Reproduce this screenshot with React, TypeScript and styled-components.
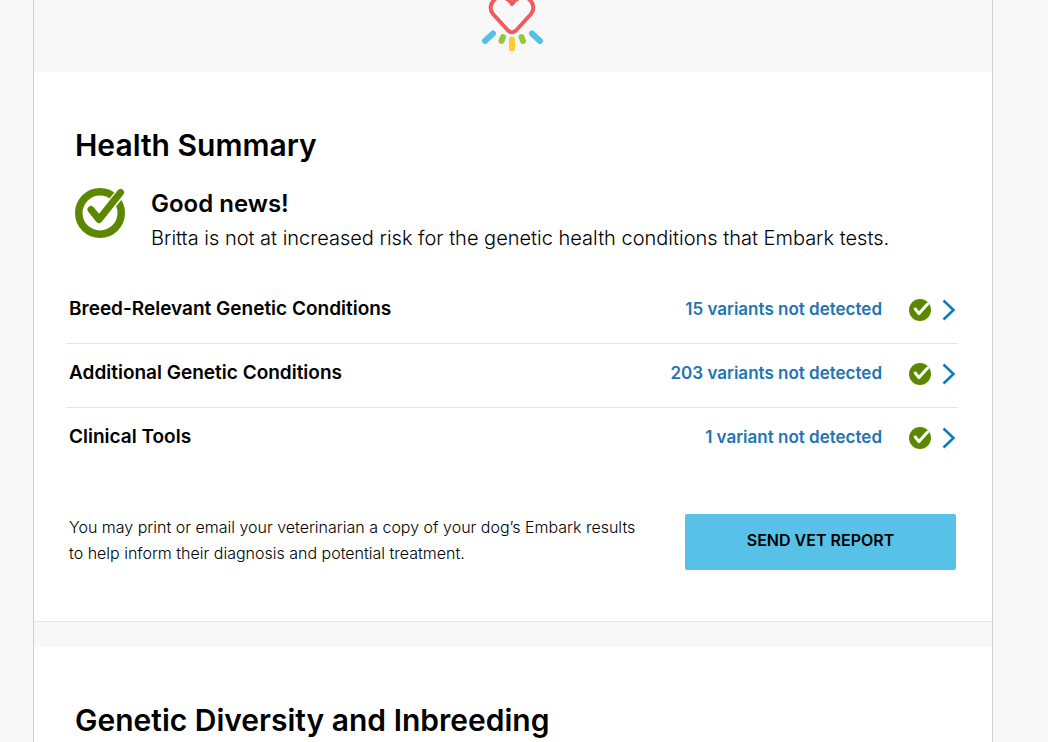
import React from "react";
import styled, { createGlobalStyle } from "styled-components";

const GlobalStyle = createGlobalStyle`
  *, *::before, *::after { box-sizing: border-box; }
  body {
    margin: 0;
    background: #f8f8f8;
    color: #000;
    font-family: Inter, "Liberation Sans", sans-serif;
  }
  h2, h3, p, ul { margin: 0; padding: 0; }
`;

const Page = styled.div`
  min-height: 100vh;
  padding: 0 55px 0 33px;
  display: flex;
`;

const Report = styled.main`
  flex: 1;
  min-width: 0;
  display: flex;
  flex-direction: column;
  border: solid #cfcfcf;
  border-width: 0 1px;
`;

const Banner = styled.header`
  height: 72px;
  display: flex;
  justify-content: center;
  align-items: flex-start;
  svg { display: block; }
`;

const Section = styled.section`
  background: #fff;
  padding: 51px 34px 51px 32px;
  border-bottom: 1px solid #e4e4e4;
  & + & { margin-top: 25px; }
  &:last-child { flex: 1; padding-bottom: 0; border-bottom: 0; }
`;

const Title = styled.h2`
  padding-left: 9px;
  font-size: 30px;
  line-height: 44px;
  font-weight: 600;
`;

const Summary = styled.div`
  display: flex;
  gap: 25px;
  padding: 19px 0 0 9px;
  svg { flex: none; display: block; margin-top: 2px; }
`;

const SummaryHeading = styled.h3`
  font-size: 24px;
  line-height: 36px;
  font-weight: 600;
`;

const SummaryText = styled.p`
  font-size: 20px;
  line-height: 32px;
  font-weight: 300;
`;

const Conditions = styled.ul`
  list-style: none;
  margin-top: 26px;
`;

const Condition = styled.li`
  & + & { border-top: 1px solid #e6e6e6; }
`;

const ConditionLink = styled.a`
  display: flex;
  align-items: center;
  height: 63px;
  padding: 0 2px 6px 3px;
  color: #000;
  font-size: 19px;
  line-height: 24px;
  font-weight: 600;
  text-decoration: none;
  svg { flex: none; display: block; }
`;

const Result = styled.span`
  margin: 0 26px 0 auto;
  color: #2176b1;
  font-size: 17px;
`;

const Marks = styled.span`
  display: flex;
  align-items: center;
  gap: 10px;
  padding-top: 2px;
`;

const VetRow = styled.div`
  display: flex;
  align-items: center;
  justify-content: space-between;
  gap: 32px;
  margin-top: 43px;
  padding: 0 2px 0 3px;
`;

const VetNote = styled.p`
  padding-bottom: 4px;
  font-size: 16px;
  line-height: 26px;
  font-weight: 300;
`;

const VetButton = styled.button`
  flex: none;
  width: 271px;
  height: 56px;
  padding: 0 0 4px;
  border: 0;
  border-radius: 2px;
  background: #57c1e8;
  color: #000;
  font: 600 16px/24px Inter, "Liberation Sans", sans-serif;
  text-transform: uppercase;
  cursor: pointer;
`;

const HeartLogo = () => (
  <svg width="64" height="52" viewBox="0 0 64 52" fill="none" strokeLinecap="round" aria-hidden="true">
    <path
      d="M31 4C27-3 18-5 13 0C9 4 8.500 10 12 14L27 30.500Q31 34 35 30.500L50 14C53.500 10 53 4 49 0C44-5 35-3 31 4Z"
      stroke="#ef5b61"
      strokeWidth="4"
      strokeLinejoin="round"
    />
    <path d="M12 33.500L4 41M51 33.500L59 41" stroke="#54c0e8" strokeWidth="6" />
    <path d="M22 37L20.500 41M40.500 37L42 41" stroke="#93c83d" strokeWidth="6" />
    <path d="M31 39.500V48.500" stroke="#fdcb35" strokeWidth="6" />
  </svg>
);

const GoodNewsIcon = () => (
  <svg width="51" height="51" viewBox="0 0 51 51" fill="none" strokeLinecap="round" strokeLinejoin="round" aria-hidden="true">
    <circle cx="25" cy="25" r="21.250" stroke="#5c8700" strokeWidth="7.500" />
    <path d="M17 21.500L24 31L45.500 5" stroke="#fff" strokeWidth="10" />
    <path d="M16 21.500L24 31.500L45.500 4.500" stroke="#5c8700" strokeWidth="7" />
  </svg>
);

const CheckIcon = () => (
  <svg width="24" height="24" viewBox="0 0 24 24" fill="none" aria-hidden="true">
    <circle cx="12" cy="12" r="11" fill="#5c8700" />
    <path d="M7.200 11L11 15.600L19.500 6" stroke="#fff" strokeWidth="3" strokeLinecap="round" strokeLinejoin="round" />
  </svg>
);

const Chevron = () => (
  <svg width="14" height="22" viewBox="0 0 14 22" fill="none" aria-hidden="true">
    <path d="M1.500 1.500L11.500 11L1.500 20.500" stroke="#0f7bb5" strokeWidth="2.500" />
  </svg>
);

const conditions = [
  { name: "Breed-Relevant Genetic Conditions", result: "15 variants not detected" },
  { name: "Additional Genetic Conditions", result: "203 variants not detected" },
  { name: "Clinical Tools", result: "1 variant not detected" },
];

export default function App() {
  return (
    <>
      <GlobalStyle />
      <Page>
        <Report>
          <Banner>
            <HeartLogo />
          </Banner>
          <Section>
            <Title>Health Summary</Title>
            <Summary>
              <GoodNewsIcon />
              <div>
                <SummaryHeading>Good news!</SummaryHeading>
                <SummaryText>
                  Britta is not at increased risk for the genetic health conditions that Embark tests.
                </SummaryText>
              </div>
            </Summary>
            <Conditions>
              {conditions.map(({ name, result }) => (
                <Condition key={name}>
                  <ConditionLink href="#">
                    <span>{name}</span>
                    <Result>{result}</Result>
                    <Marks>
                      <CheckIcon />
                      <Chevron />
                    </Marks>
                  </ConditionLink>
                </Condition>
              ))}
            </Conditions>
            <VetRow>
              <VetNote>
                You may print or email your veterinarian a copy of your dog’s Embark results
                <br />
                to help inform their diagnosis and potential treatment.
              </VetNote>
              <VetButton type="button">Send Vet Report</VetButton>
            </VetRow>
          </Section>
          <Section>
            <Title>Genetic Diversity and Inbreeding</Title>
          </Section>
        </Report>
      </Page>
    </>
  );
}
